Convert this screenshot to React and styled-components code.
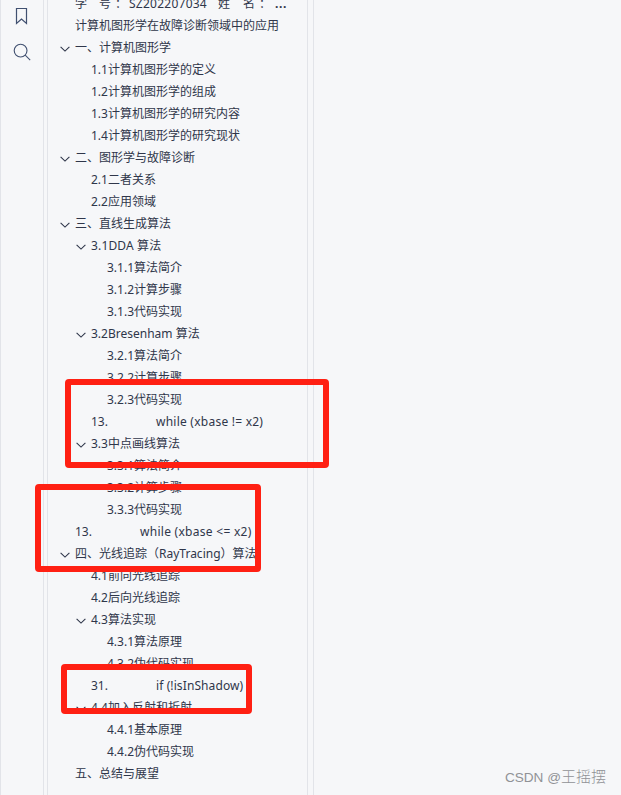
import React from 'react';
import styled, { createGlobalStyle } from 'styled-components';

const GlobalStyle = createGlobalStyle`
  body {
    margin: 0;
    background: #f6f7f9;
    overflow: hidden;
  }
`;

const Page = styled.div`
  position: relative;
  display: flex;
  width: 621px;
  height: 795px;
  overflow: hidden;
  box-sizing: border-box;
  background: #f6f7f9;
  border-left: 1px solid #e2e4e9;
  color: #2f364a;
  font-family: 'Noto Sans', 'Noto Sans CJK SC', sans-serif;
  font-size: 12px;
`;

const IconRail = styled.nav`
  display: flex;
  flex-direction: column;
  align-items: center;
  gap: 18px;
  width: 42px;
  padding-top: 7px;
  border-right: 1px solid #e2e4e9;

  svg {
    display: block;
  }
`;

const OutlinePanel = styled.aside`
  width: 259px;
  margin-left: 3px;
  border-left: 1px solid #e2e4e9;
  border-right: 1px solid #e2e4e9;
`;

const Content = styled.main`
  flex: 1;
  margin-left: 5px;
  border-left: 1px solid #e2e4e9;
`;

const Tree = styled.ul`
  list-style: none;
  margin: -7px 0 0;
  padding: 0;
`;

const Row = styled.li`
  display: flex;
  align-items: center;
  height: 22px;
  padding-left: ${({ $level }) => 11 + $level * 16}px;
  line-height: 22px;
  white-space: pre;
`;

const Toggle = styled.span`
  display: flex;
  width: 15px;
  padding: 1px 0 0 1px;
  flex: none;
`;

const Label = styled.span`
  letter-spacing: ${({ $spacing }) => $spacing || 0}px;
`;

const CenteredMark = styled.span`
  font-family: 'Noto Sans CJK TC', sans-serif;
  line-height: 1;
`;

const Cell = styled.span`
  flex: none;
  width: ${({ $width }) => $width}px;
  font-weight: ${({ $bold }) => ($bold ? 700 : 400)};
  letter-spacing: ${({ $spacing }) => $spacing || 0}px;
`;

const Highlight = styled.div`
  position: absolute;
  left: ${({ $x }) => $x - 1}px;
  top: ${({ $y }) => $y}px;
  width: ${({ $w }) => $w}px;
  height: ${({ $h }) => $h}px;
  box-sizing: border-box;
  border: 6px solid #ff2013;
  border-radius: 4px;
`;

const Watermark = styled.div`
  position: absolute;
  right: 15px;
  bottom: 7px;
  color: #909296;
  font-family: 'Liberation Sans', sans-serif;
  font-size: 13.6px;
  line-height: 20px;
  white-space: nowrap;
`;

const WatermarkName = styled.span`
  font-family: 'Noto Sans CJK SC', sans-serif;
  font-size: 15px;
  font-weight: 300;
  line-height: 1;
`;

const BookmarkIcon = () => (
  <svg width="18" height="18" viewBox="0 0 18 18" fill="none" stroke="#405070" strokeWidth="1.2">
    <path d="M3.5 1.5h10v15l-5-4.5-5 4.5z" />
  </svg>
);

const SearchIcon = () => (
  <svg width="18" height="18" viewBox="0 0 18 18" fill="none" stroke="#405070" strokeWidth="1.1">
    <circle cx="7.6" cy="7.6" r="6.4" />
    <path d="M12.2 12.2l5 4.9" />
  </svg>
);

const Chevron = () => (
  <svg width="10" height="8" viewBox="0 0 10 8" fill="none" stroke="#2f364a" strokeWidth="1.1">
    <path d="M.6 1.8L5 6.1l4.4-4.3" />
  </svg>
);

const outline = [
  { level: 0, text: '计算机图形学在故障诊断领域中的应用' },
  { level: 0, text: '一、计算机图形学', open: true },
  { level: 1, text: '1.1计算机图形学的定义' },
  { level: 1, text: '1.2计算机图形学的组成' },
  { level: 1, text: '1.3计算机图形学的研究内容' },
  { level: 1, text: '1.4计算机图形学的研究现状' },
  { level: 0, text: '二、图形学与故障诊断', open: true },
  { level: 1, text: '2.1二者关系' },
  { level: 1, text: '2.2应用领域' },
  { level: 0, text: '三、直线生成算法', open: true },
  { level: 1, text: '3.1DDA 算法', open: true, spacing: 0.15 },
  { level: 2, text: '3.1.1算法简介' },
  { level: 2, text: '3.1.2计算步骤' },
  { level: 2, text: '3.1.3代码实现' },
  { level: 1, text: '3.2Bresenham 算法', open: true },
  { level: 2, text: '3.2.1算法简介' },
  { level: 2, text: '3.2.2计算步骤' },
  { level: 2, text: '3.2.3代码实现' },
  { level: 1, number: '13.', text: 'while (xbase != x2)', spacing: 0.24 },
  { level: 1, text: '3.3中点画线算法', open: true },
  { level: 2, text: '3.3.1算法简介' },
  { level: 2, text: '3.3.2计算步骤' },
  { level: 2, text: '3.3.3代码实现' },
  { level: 0, number: '13.', text: 'while (xbase <= x2)', spacing: 0.28 },
  { level: 0, text: '四、光线追踪（RayTracing）算法', open: true },
  { level: 1, text: '4.1前向光线追踪' },
  { level: 1, text: '4.2后向光线追踪' },
  { level: 1, text: '4.3算法实现', open: true },
  { level: 2, text: '4.3.1算法原理' },
  { level: 2, text: '4.3.2伪代码实现' },
  { level: 1, number: '31.', text: 'if (!isInShadow)', spacing: 0.1 },
  { level: 1, text: '4.4加入反射和折射', open: true },
  { level: 2, text: '4.4.1基本原理' },
  { level: 2, text: '4.4.2伪代码实现' },
  { level: 0, text: '五、总结与展望' },
];

const TitleRow = () => (
  <Row $level={0}>
    <Toggle />
    <Cell $width={24}>学</Cell>
    <Cell $width={16}>号</Cell>
    <Cell $width={14}>：</Cell>
    <Cell $width={89} $spacing={0.25}>SZ202207034</Cell>
    <Cell $width={25}>姓</Cell>
    <Cell $width={16}>名</Cell>
    <Cell $width={16}>：</Cell>
    <Cell $width={14} $bold $spacing={0.6}>...</Cell>
  </Row>
);

const OutlineRow = ({ item }) => (
  <Row $level={item.level}>
    <Toggle>{item.open && <Chevron />}</Toggle>
    {item.number && <Cell $width={65}>{item.number}</Cell>}
    <Label $spacing={item.spacing}>
      {item.text.split(/([（）])/).map((part, index) =>
        /[（）]/.test(part) ? (
          <CenteredMark key={index} lang="zh-TW">{part}</CenteredMark>
        ) : (
          part
        )
      )}
    </Label>
  </Row>
);

const App = () => {
  return (
    <>
      <GlobalStyle />
      <Page>
        <IconRail>
          <BookmarkIcon />
          <SearchIcon />
        </IconRail>

        <OutlinePanel>
          <Tree>
            <TitleRow />
            {outline.map((item, index) => (
              <OutlineRow key={index} item={item} />
            ))}
          </Tree>
        </OutlinePanel>

        <Content />

        <Highlight $x={65} $y={379} $w={264} $h={89} />
        <Highlight $x={35} $y={484} $w={226} $h={88} />
        <Highlight $x={61} $y={664} $w={191} $h={50} />
        <Watermark>
          CSDN @<WatermarkName>王摇摆</WatermarkName>
        </Watermark>
      </Page>
    </>
  );
};

export default App;
